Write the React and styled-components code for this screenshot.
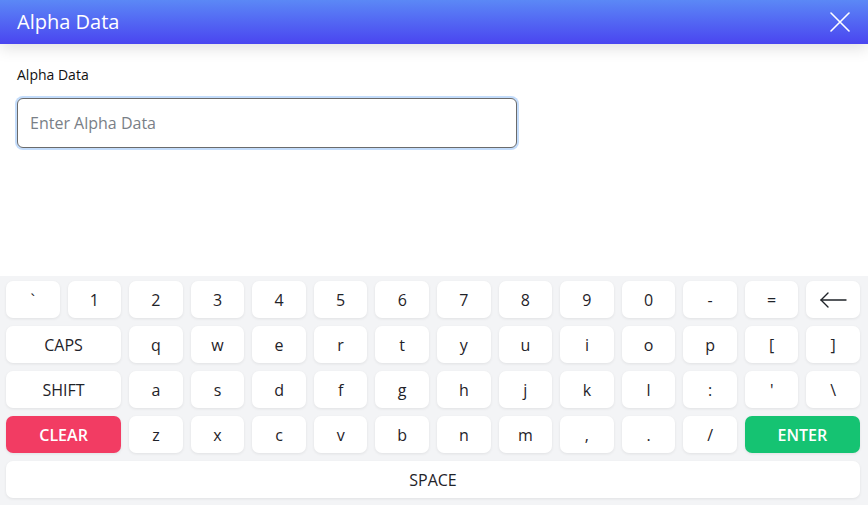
import React from 'react';
import styled, { createGlobalStyle } from "styled-components";

const GlobalStyle = createGlobalStyle`
    html, body {
        margin: 0;
        padding: 0;
        background: #fff;
        font-family: "Open Sans", "Noto Sans", sans-serif;
    }
    * {
        box-sizing: border-box;
    }
`

const Modal = styled.div`
    width: 868px;
    height: 505px;
    display: flex;
    flex-direction: column;
    background: #fff;
    overflow: hidden;
`

const TitleBar = styled.div`
    height: 44px;
    flex-shrink: 0;
    display: flex;
    align-items: center;
    justify-content: space-between;
    padding: 0 18px 0 17px;
    background: linear-gradient(180deg, #5b88f6 0%, #4a45f0 100%);
    box-shadow: 0 4px 16px rgba(0, 0, 0, 0.13);
    position: relative;
    z-index: 1;
`

const Title = styled.h1`
    margin: 0;
    color: #fff;
    font-size: 20px;
    font-weight: 400;
    line-height: 1;
`

const CloseButton = styled.button`
    border: none;
    background: none;
    padding: 0;
    width: 20px;
    height: 20px;
    display: flex;
    cursor: pointer;
`

const Body = styled.div`
    flex: 1;
    padding: 21px 17px 0;
`

const Label = styled.label`
    display: block;
    font-size: 14px;
    color: #111;
    margin-bottom: 14px;
`

const Input = styled.input`
    width: 500px;
    height: 50px;
    padding: 0 12px;
    border: 1px solid #6b6b6b;
    border-radius: 6px;
    font-family: inherit;
    font-size: 16px;
    color: #222;
    outline: none;
    box-shadow: 0 0 0 2px #c3dcfb;

    &::placeholder {
        color: #7a7f87;
    }
`

const Keyboard = styled.div`
    flex-shrink: 0;
    background: #f3f4f6;
    padding: 5px 8px 7px 6px;
    display: grid;
    grid-template-columns: repeat(14, 1fr);
    grid-auto-rows: 37px;
    gap: 8px;
`

const Key = styled.button`
    grid-column: span ${({span}) => span || 1};
    border: none;
    border-radius: 7px;
    background: ${({bg}) => bg || '#fff'};
    color: ${({bg}) => (bg ? '#fff' : '#1f2329')};
    font-family: inherit;
    font-size: 16px;
    font-weight: ${({bg}) => (bg ? 600 : 400)};
    box-shadow: 0 1px 3px rgba(0, 0, 0, 0.08);
    display: flex;
    align-items: center;
    justify-content: center;
    padding: 0;
    cursor: pointer;
`

const rows = [
    ['`', '1', '2', '3', '4', '5', '6', '7', '8', '9', '0', '-', '='],
    ['q', 'w', 'e', 'r', 't', 'y', 'u', 'i', 'o', 'p', '[', ']'],
    ['a', 's', 'd', 'f', 'g', 'h', 'j', 'k', 'l', ':', "'", '\\'],
    ['z', 'x', 'c', 'v', 'b', 'n', 'm', ',', '.', '/'],
]

const BackArrow = () => (
    <svg width="28" height="16" viewBox="0 0 28 16" fill="none" stroke="#1f2329" strokeWidth="1.4" strokeLinecap="round" strokeLinejoin="round">
        <path d="M27 8H2" />
        <path d="M9 1L2 8l7 7" />
    </svg>
)

const App = () => {
    return (
        <>
        <GlobalStyle />
        <Modal>
            <TitleBar>
                <Title>Alpha Data</Title>
                <CloseButton aria-label="close">
                    <svg width="20" height="20" viewBox="0 0 20 20" stroke="#fff" strokeWidth="1.6" strokeLinecap="round">
                        <path d="M1 1l18 18M19 1L1 19" />
                    </svg>
                </CloseButton>
            </TitleBar>

            <Body>
                <Label htmlFor="alpha">Alpha Data</Label>
                <Input id="alpha" placeholder="Enter Alpha Data" />
            </Body>

            <Keyboard>
                {rows[0].map(k => <Key key={k}>{k}</Key>)}
                <Key><BackArrow /></Key>

                <Key span={2}>CAPS</Key>
                {rows[1].map(k => <Key key={k}>{k}</Key>)}

                <Key span={2}>SHIFT</Key>
                {rows[2].map(k => <Key key={k}>{k}</Key>)}

                <Key span={2} bg="#f23c63">CLEAR</Key>
                {rows[3].map(k => <Key key={k}>{k}</Key>)}
                <Key span={2} bg="#15c372">ENTER</Key>

                <Key span={14}>SPACE</Key>
            </Keyboard>
        </Modal>
        </>
    )
}

export default App
